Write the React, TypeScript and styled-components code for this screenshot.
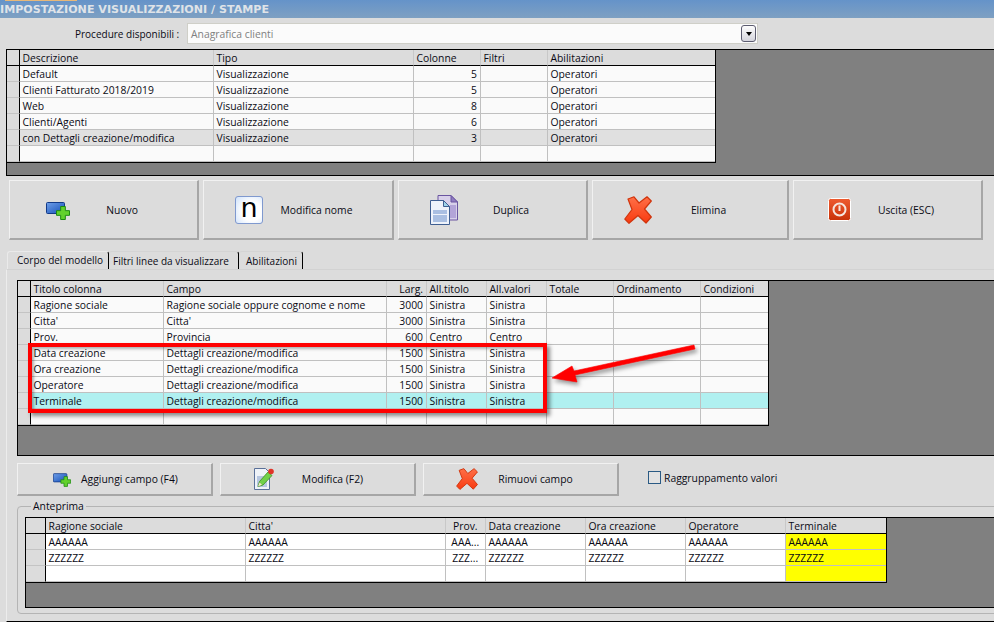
import { useId, type ReactNode } from "react";
import styled, { createGlobalStyle } from "styled-components";

const Global = createGlobalStyle`
  html, body { margin: 0; padding: 0; background: #dcdcdc; }
  * { box-sizing: border-box; }
`;

const Page = styled.div`
  position: relative;
  width: 994px;
  height: 622px;
  overflow: hidden;
  background: #dcdcdc;
  color: #0a0a14;
  font-family: "Open Sans", "Liberation Sans", sans-serif;
  font-size: 10.35px;
`;

const TitleBar = styled.div`
  position: relative;
  height: 18px;
  background: linear-gradient(#6593c9, #7ea0c2);
  color: #dfe3e8;
  font-family: "DejaVu Sans", sans-serif;
  font-size: 11.1px;
  font-weight: bold;
  line-height: 19px;
  white-space: nowrap;
  &::before {
    content: "";
    position: absolute;
    left: 5px;
    top: 0;
    width: 72px;
    height: 1px;
    background: #e8b878;
  }
`;

const ComboRow = styled.div`
  display: flex;
  align-items: flex-start;
  height: 31px;
  padding: 5px 0 0 75px;
`;

const ComboLabel = styled.span`
  width: 112px;
  font-size: 10px;
  line-height: 22px;
`;

const Combo = styled.div`
  display: flex;
  align-items: center;
  justify-content: space-between;
  width: 571px;
  height: 21px;
  padding: 0 1px 0 3px;
  background: #fbfbfb;
  border: 1px solid #cfcfc8;
  color: #808080;
`;

const ComboButton = styled.span`
  display: flex;
  align-items: center;
  justify-content: center;
  width: 15px;
  height: 17px;
  border: 1px solid #5c5c70;
  border-radius: 3px;
  background: linear-gradient(#fdfdfd, #d4d4dc);
  &::after {
    content: "";
    border-left: 3.5px solid transparent;
    border-right: 3.5px solid transparent;
    border-top: 4px solid #000;
  }
`;

const GridFrame = styled.div<{ $height: number; $left?: number }>`
  height: ${(p) => p.$height}px;
  margin-left: ${(p) => p.$left ?? 0}px;
  background: #808080;
  border: 1px solid #000;
  border-right: none;
  overflow: hidden;
`;

const GridTable = styled.div`
  width: fit-content;
  border-right: 1px solid #000;
  border-bottom: 1px solid #000;
`;

const GridRow = styled.div<{ $template: string }>`
  display: grid;
  grid-template-columns: ${(p) => p.$template};
  height: 16px;
  line-height: 15px;
`;

const Indicator = styled.div<{ $head?: boolean }>`
  background: #dcdcdc;
  border-right: 1px solid #000;
  border-bottom: 1px solid ${(p) => (p.$head ? "#000" : "#c4c4c4")};
`;

const HeadCell = styled.div<{ $align: string }>`
  padding: 1px 3px 0 2.5px;
  background: #dcdcdc;
  border-right: 1px solid #c8c8c8;
  border-bottom: 1px solid #000;
  text-align: ${(p) => p.$align};
  white-space: nowrap;
  overflow: hidden;
  &:last-child { border-right: none; }
`;

const Cell = styled.div<{ $align: string; $bg: string }>`
  padding: 1px 3px 0 2.5px;
  background: ${(p) => p.$bg};
  border-right: 1px solid #c0c0c0;
  border-bottom: 1px solid #c0c0c0;
  text-align: ${(p) => p.$align};
  white-space: nowrap;
  overflow: hidden;
  &:last-child { border-right: none; }
`;

type Column = { title: string; width: number; align?: string; headAlign?: string; bg?: string };

const DataGrid = ({
  columns,
  rows,
  indicator,
  base,
  rowColors = {},
}: {
  columns: Column[];
  rows: string[][];
  indicator: number;
  base: string;
  rowColors?: Record<number, string>;
}) => {
  const template = [indicator, ...columns.map((c) => c.width)].map((w) => `${w}px`).join(" ");
  return (
    <GridTable>
      <GridRow $template={template}>
        <Indicator $head />
        {columns.map((c) => (
          <HeadCell key={c.title} $align={c.headAlign ?? "left"}>{c.title}</HeadCell>
        ))}
      </GridRow>
      {rows.map((row, r) => (
        <GridRow key={r} $template={template}>
          <Indicator />
          {columns.map((c, i) => (
            <Cell key={c.title} $align={c.align ?? "left"} $bg={c.bg ?? rowColors[r] ?? base}>
              {row[i] ?? ""}
            </Cell>
          ))}
        </GridRow>
      ))}
    </GridTable>
  );
};

const ButtonRow = styled.div<{ $gap: number; $left?: number; $top: number }>`
  display: flex;
  align-items: center;
  gap: ${(p) => p.$gap}px;
  margin-top: ${(p) => p.$top}px;
  padding-left: ${(p) => p.$left ?? 0}px;
`;

const Button = styled.div<{ $width: number; $small?: boolean }>`
  display: grid;
  grid-template-columns: ${(p) => (p.$small ? "20px 1fr" : "28px 1fr")};
  align-items: center;
  justify-items: center;
  flex: none;
  width: ${(p) => p.$width}px;
  height: ${(p) => (p.$small ? 33 : 60)}px;
  padding: ${(p) => (p.$small ? "0 23px 0 33px" : "0 22px 0 31px")};
  background: #dcdcdc;
  border-style: solid;
  border-width: 1px 2px 2px 1px;
  border-color: #f1f1f1 #a6a6a6 #a6a6a6 #f1f1f1;
  white-space: nowrap;
`;

const Tabs = styled.div`
  display: flex;
  height: 18px;
  margin: 11px 0 0 7px;
`;

const Tab = styled.div<{ $active?: boolean; $width: number; $pad: number }>`
  width: ${(p) => p.$width}px;
  padding: ${(p) => (p.$active ? 1 : 2)}px 0 0 ${(p) => p.$pad}px;
  border-right: 1px solid #000;
  border-top: 1px solid ${(p) => (p.$active ? "#eaeaea" : "#d4d4d4")};
  border-left: ${(p) => (p.$active ? "1px solid #eaeaea" : "none")};
  border-radius: 3px 3px 0 0;
  font-size: 10px;
  line-height: 15px;
  white-space: nowrap;
`;

const TabPanel = styled.div`
  height: 353px;
  margin-left: 6px;
  padding: 10px 0 0 10px;
  border-top: 1px solid #d2d2d2;
  border-left: 1px solid #ececec;
  border-bottom: 1px solid #000;
`;

const CheckLabel = styled.label`
  display: flex;
  align-items: center;
  gap: 3px;
  margin: -4px 0 0 22px;
`;

const CheckBox = styled.span`
  width: 13px;
  height: 13px;
  border: 1px solid #2a5a84;
  background: #e2e2e2;
`;

const GroupBox = styled.fieldset`
  min-inline-size: 0;
  height: 114px;
  margin: 4px -5px 0 0;
  padding: 4px 0 0 7px;
  border: 1px solid #b4b4b4;
  border-radius: 4px;
`;

const GroupLegend = styled.legend`
  margin-left: 6px;
  padding: 0 2px;
  height: 13px;
  line-height: 13px;
`;

const RedBox = styled.div`
  position: absolute;
  left: 28px;
  top: 343px;
  width: 519px;
  height: 70px;
  border: 4px solid #ff0000;
  box-shadow: 3px 3px 4px rgba(0, 0, 0, 0.45), inset 2px 2px 3px rgba(0, 0, 0, 0.3);
`;

const ArrowSvg = styled.svg`
  position: absolute;
  left: 545px;
  top: 338px;
  filter: drop-shadow(2px 3px 2px rgba(0, 0, 0, 0.4));
`;

const NameIcon = styled.span`
  display: flex;
  align-items: center;
  justify-content: center;
  width: 28px;
  height: 28px;
  padding-bottom: 5px;
  border: 1px solid #7f99cf;
  border-radius: 3px;
  background: radial-gradient(circle at 60% 55%, #fff 45%, #cfe2fb 100%);
  color: #000;
  font-family: "DejaVu Sans", sans-serif;
  font-size: 27px;
  line-height: 1;
`;

const AddSvg = styled.svg<{ $shift: number }>`
  margin: 2px 0 0 ${(p) => p.$shift}px;
`;

const PlusShape = ({ x, y, s }: { x: number; y: number; s: number }) => {
  const a = s * 0.32;
  const b = s * 0.68;
  const d = `M${x + a} ${y}h${b - a}v${a}h${a}v${b - a}h${-a}v${a}h${a - b}v${-a}h${-a}v${a - b}h${a}z`;
  return <path d={d} fill="#62d12c" stroke="#1c8a10" strokeWidth="1" />;
};

const AddIcon = ({ w, h, shift }: { w: number; h: number; shift: number }) => {
  const id = useId();
  return (
    <AddSvg width={w} height={h} $shift={shift} viewBox="0 0 24 18">
      <defs>
        <linearGradient id={id} x1="0" y1="0" x2="1" y2="1">
          <stop offset="0" stopColor="#6f9fe8" />
          <stop offset="1" stopColor="#1550b8" />
        </linearGradient>
      </defs>
      <rect x="0.5" y="0.5" width="18" height="11" rx="1" fill={`url(#${id})`} stroke="#123a88" />
      <PlusShape x={10.5} y={4.5} s={13} />
    </AddSvg>
  );
};

const RemoveIcon = ({ size }: { size: number }) => {
  const id = useId();
  return (
    <svg width={size} height={size} viewBox="0 0 28 28">
      <defs>
        <linearGradient id={id} x1="0" y1="0" x2="0" y2="1">
          <stop offset="0" stopColor="#ff7048" />
          <stop offset="1" stopColor="#f83a10" />
        </linearGradient>
      </defs>
      <path
        d="M4 3 L10 .8 L15 7 L23 .8 L27.3 5 L20.5 13 L27.3 21 L22 27 L14 19.5 L5 27.3 L.8 23 L8 13.5 Z"
        fill={`url(#${id})`}
        stroke="#d0340c"
        strokeWidth="1.2"
        strokeLinejoin="round"
      />
    </svg>
  );
};

const DuplicateIcon = () => (
  <svg width="28" height="30" viewBox="0 0 28 30">
    <path d="M8 .5h13l6.5 6.5v18H8z" fill="#d8d0ea" stroke="#6a55a0" />
    <rect x="20" y="10" width="6" height="13" fill="#b3a4d8" />
    <path d="M21 .5v6.5h6.5z" fill="#8f7cc0" stroke="#6a55a0" />
    <path d="M.5 5.5h13l6 6v18H.5z" fill="#eef3fb" stroke="#3f5f92" />
    <rect x="3" y="15" width="14" height="12" fill="#a9bfe2" />
    <rect x="3" y="19" width="14" height="1" fill="#eef3fb" />
    <path d="M13.5 5.5v6h6z" fill="#9fd4ea" stroke="#3f5f92" />
  </svg>
);

const PowerIcon = () => {
  const id = useId();
  return (
    <svg width="23" height="23" viewBox="0 0 23 23">
      <defs>
        <linearGradient id={id} x1="0" y1="0" x2="0" y2="1">
          <stop offset="0" stopColor="#ee5b30" />
          <stop offset="1" stopColor="#c93208" />
        </linearGradient>
      </defs>
      <rect x="0.5" y="0.5" width="22" height="22" rx="2" fill={`url(#${id})`} stroke="#fff" />
      <circle cx="11.5" cy="11.5" r="6" fill="none" stroke="#f6e6de" strokeWidth="2" />
      <rect x="10.5" y="7.5" width="2" height="5.5" fill="#f6e6de" />
    </svg>
  );
};

const EditIcon = () => (
  <svg width="20" height="22" viewBox="0 0 20 22">
    <path d="M.5 .5h11l4 4v17H.5z" fill="#eef2f8" stroke="#5a7099" />
    <rect x="3" y="8" width="10" height="11" fill="#b6c6e0" />
    <path d="M4 18.5l1.5-5L14 4l4 3.5-9 9.5z" fill="#72d04a" stroke="#3a9020" strokeWidth=".8" />
    <path d="M4 18.5l1.5-4 2.5 2.2z" fill="#f4e6c8" />
    <circle cx="17" cy="3.5" r="2.8" fill="#e03428" />
  </svg>
);

const Arrow = () => (
  <ArrowSvg width="160" height="52" viewBox="0 0 160 52">
    <path
      d="M149 7 L150 11 L30 37 L32 44 L7 40 L27 28 L29 33 Z"
      fill="#ff0000"
      stroke="#ff0000"
      strokeWidth=".6"
      strokeLinejoin="round"
    />
  </ArrowSvg>
);

const R = "right";
const C = "center";

const procColumns: Column[] = [
  { title: "Descrizione", width: 194 },
  { title: "Tipo", width: 200 },
  { title: "Colonne", width: 67, align: R },
  { title: "Filtri", width: 67 },
  { title: "Abilitazioni", width: 167 },
];

const procRows = [
  ["Default", "Visualizzazione", "5", "", "Operatori"],
  ["Clienti Fatturato 2018/2019", "Visualizzazione", "5", "", "Operatori"],
  ["Web", "Visualizzazione", "8", "", "Operatori"],
  ["Clienti/Agenti", "Visualizzazione", "6", "", "Operatori"],
  ["con Dettagli creazione/modifica", "Visualizzazione", "3", "", "Operatori"],
  [],
];

const modelColumns: Column[] = [
  { title: "Titolo colonna", width: 133 },
  { title: "Campo", width: 223 },
  { title: "Larg.", width: 40, align: R, headAlign: R },
  { title: "All.titolo", width: 60 },
  { title: "All.valori", width: 60 },
  { title: "Totale", width: 67 },
  { title: "Ordinamento", width: 87 },
  { title: "Condizioni", width: 67 },
];

const DETT = "Dettagli creazione/modifica";
const modelRows = [
  ["Ragione sociale", "Ragione sociale oppure cognome e nome", "3000", "Sinistra", "Sinistra"],
  ["Citta'", "Citta'", "3000", "Sinistra", "Sinistra"],
  ["Prov.", "Provincia", "600", "Centro", "Centro"],
  ["Data creazione", DETT, "1500", "Sinistra", "Sinistra"],
  ["Ora creazione", DETT, "1500", "Sinistra", "Sinistra"],
  ["Operatore", DETT, "1500", "Sinistra", "Sinistra"],
  ["Terminale", DETT, "1500", "Sinistra", "Sinistra"],
  [],
];

const previewColumns: Column[] = [
  { title: "Ragione sociale", width: 200 },
  { title: "Citta'", width: 200 },
  { title: "Prov.", width: 40, align: C, headAlign: C },
  { title: "Data creazione", width: 100 },
  { title: "Ora creazione", width: 100 },
  { title: "Operatore", width: 100 },
  { title: "Terminale", width: 100, bg: "#ffff00" },
];

const previewRows = [
  ["AAAAAA", "AAAAAA", "AAA...", "AAAAAA", "AAAAAA", "AAAAAA", "AAAAAA"],
  ["ZZZZZZ", "ZZZZZZ", "ZZZ...", "ZZZZZZ", "ZZZZZZ", "ZZZZZZ", "ZZZZZZ"],
  [],
];

const mainButtons: { label: string; width: number; icon: ReactNode }[] = [
  { label: "Nuovo", width: 190, icon: <AddIcon w={24} h={18} shift={6} /> },
  { label: "Modifica nome", width: 191, icon: <NameIcon>n</NameIcon> },
  { label: "Duplica", width: 190, icon: <DuplicateIcon /> },
  { label: "Elimina", width: 197, icon: <RemoveIcon size={28} /> },
  { label: "Uscita (ESC)", width: 190, icon: <PowerIcon /> },
];

export default function App() {
  return (
    <Page>
      <Global />
      <TitleBar>IMPOSTAZIONE VISUALIZZAZIONI / STAMPE</TitleBar>
      <ComboRow>
        <ComboLabel>Procedure disponibili :</ComboLabel>
        <Combo>
          Anagrafica clienti
          <ComboButton />
        </Combo>
      </ComboRow>
      <GridFrame $height={127} $left={6}>
        <DataGrid columns={procColumns} rows={procRows} indicator={13} base="#fafafa" rowColors={{ 4: "#e0e0e0" }} />
      </GridFrame>
      <ButtonRow $gap={4} $left={9} $top={4}>
        {mainButtons.map((b) => (
          <Button key={b.label} $width={b.width}>
            {b.icon}
            <span>{b.label}</span>
          </Button>
        ))}
      </ButtonRow>
      <Tabs>
        <Tab $active $width={102} $pad={9}>Corpo del modello</Tab>
        <Tab $width={130} $pad={4}>Filtri linee da visualizzare</Tab>
        <Tab $width={64} $pad={7}>Abilitazioni</Tab>
      </Tabs>
      <TabPanel>
        <GridFrame $height={176}>
          <DataGrid columns={modelColumns} rows={modelRows} indicator={13} base="#fafafa" rowColors={{ 6: "#b0f0f0" }} />
        </GridFrame>
        <ButtonRow $gap={7} $top={7}>
          <Button $width={196} $small>
            <AddIcon w={18} h={14} shift={1} />
            <span>Aggiungi campo (F4)</span>
          </Button>
          <Button $width={196} $small>
            <EditIcon />
            <span>Modifica (F2)</span>
          </Button>
          <Button $width={196} $small>
            <RemoveIcon size={22} />
            <span>Rimuovi campo</span>
          </Button>
          <CheckLabel>
            <CheckBox />
            Raggruppamento valori
          </CheckLabel>
        </ButtonRow>
        <GroupBox>
          <GroupLegend>Anteprima</GroupLegend>
          <GridFrame $height={91}>
            <DataGrid columns={previewColumns} rows={previewRows} indicator={20} base="#ffffff" />
          </GridFrame>
        </GroupBox>
      </TabPanel>
      <RedBox />
      <Arrow />
    </Page>
  );
}
